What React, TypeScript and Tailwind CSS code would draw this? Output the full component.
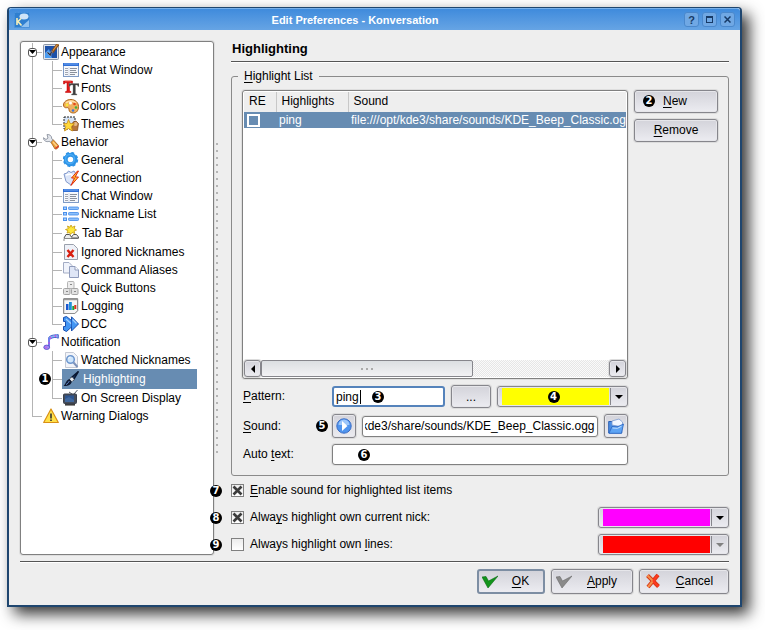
import { type ReactNode } from "react";

const raised =
  "border border-[#86868c] rounded-[3px] bg-linear-to-b from-[#d3d3da] to-[#ececf1] shadow-[inset_0_0_0_1px_#e6e6ea,0_0_0_1px_#dcdcdc]";
const field =
  "min-w-0 border border-[#808080] rounded-[3px] bg-white shadow-[0_0_0_1px_#dedede] outline-none";

function U({ children }: { children: ReactNode }) {
  return <span className="underline underline-offset-2 decoration-1">{children}</span>;
}

function Badge({ n, className = "" }: { n: number; className?: string }) {
  return (
    <span
      className={`flex size-3 shrink-0 items-center justify-center rounded-full bg-black font-['DejaVu_Sans'] text-[10px] leading-3 font-bold text-white ${className}`}
    >
      {n}
    </span>
  );
}

function Svg({ children, size = 16 }: { children: ReactNode; size?: number }) {
  return (
    <svg width={size} height={size} viewBox="0 0 16 16" className="shrink-0" aria-hidden="true">
      {children}
    </svg>
  );
}

const Page = () => <path d="M1.5.5h9l4 4v11h-13z" fill="#eef1f8" stroke="#9aa0ac" />;

const icons: Record<string, ReactNode> = {
  appearance: (
    <>
      <rect x=".5" y=".5" width="15" height="15" rx="1" fill="#dfe3ea" stroke="#8b95a6" />
      <rect x="2" y="2" width="12" height="12" fill="#1c50a8" />
      <path d="M2 14V9l4-4 3 9z" fill="#4a9cf2" />
      <path d="M15 0L9 8.500" stroke="#8a4d16" strokeWidth="3" />
      <path d="M14.500.5L10 6.500" stroke="#d9964a" strokeWidth="1.200" />
      <path d="M9.500 7.500l-2 5-4-4 1.500-.5 2 1.500 1-2.500z" fill="#222c40" stroke="#ccd" strokeWidth=".4" />
    </>
  ),
  chat: (
    <>
      <rect x=".5" y="1.500" width="15" height="13" fill="#f6f8fc" stroke="#7f9bc6" />
      <rect x="0" y="1" width="16" height="3" fill="#2f6fd6" />
      <path d="M1 2h14" stroke="#74a8f2" />
      <path d="M2 6.500h3M2 8.500h3M2 10.500h3M2 12.500h3" stroke="#a0a6b2" />
      <path d="M7 6.500h7M7 8.500h6M7 10.500h7M7 12.500h5" stroke="#8a909c" />
      <path d="M6 5v9" stroke="#c3cbd9" strokeWidth=".6" />
    </>
  ),
  fonts: (
    <>
      <path d="M.5 4V1h9v3H8.500L8 2.700H6.500V11l1.500.6v.9H2.500v-.9L4 11V2.700H2L1.500 4z" fill="#e01818" stroke="#b00" strokeWidth=".5" />
      <path d="M6 6.500V3.500h10v3h-1l-.7-1.500h-1.800v8.500l1.500.7V15H8.500v-.8l1.500-.7V5H7.700L7 6.500z" fill="#3c3c3c" stroke="#888" strokeWidth=".4" />
      <path d="M2 1h6" stroke="#ff7d6d" strokeWidth=".8" />
    </>
  ),
  colors: (
    <>
      <path d="M8 1.500C3.500 1.500.5 4 .5 7c0 2 1.500 3 3 2.700 2-.3 2.500.5 2.500 2 0 2 2 3.300 4.500 3.300 3 0 5-2.500 5-6.500 0-4-3.500-7-7.500-7z" fill="#f0b060" stroke="#ad6418" />
      <path d="M3 5c2-2.500 7-3 10 0" stroke="#ffe0a8" strokeWidth="1.500" fill="none" />
      <circle cx="4" cy="7" r="1.400" fill="#f8e838" />
      <circle cx="7.500" cy="5" r="1.500" fill="#fff" />
      <circle cx="11.500" cy="6" r="1.300" fill="#e24a1c" />
      <circle cx="13" cy="9.500" r="1.300" fill="#44b03a" />
      <circle cx="10" cy="12.500" r="1.300" fill="#3a76e0" />
    </>
  ),
  themes: (
    <>
      <rect x="1" y="1" width="11" height="12" fill="#d4e2f5" stroke="#222" strokeWidth="1" strokeDasharray="2 1" />
      <path d="M10 6l3-1 2.500 2.500-1 7H8z" fill="#b8763a" stroke="#7a4216" strokeWidth=".7" />
      <circle cx="12.500" cy="8" r="2" fill="#e6b98a" />
      <path d="M5.500 3.500L7.200 7.500l4.300.3-3.200 2.700 1.200 4.500-4-2.500L1.500 15l1.200-4.500L.5 7.800 4 7.500z" fill="#ffd93b" stroke="#c98a10" strokeWidth=".8" />
    </>
  ),
  behavior: (
    <>
      <path d="M7.500 7.500l2.500-2 5.500 6c.8 1.500-1.500 4-3.500 3.500z" fill="#eaa03c" stroke="#a5621a" strokeWidth=".8" />
      <path d="M10 8l4.500 5" stroke="#ffd48a" strokeWidth="1.200" />
      <path d="M12.500 14.500l3-2.500" stroke="#d8352a" strokeWidth="1.500" />
      <path d="M4 .6C6.500 0 9 2 8.700 4.700l1.300 1L7.500 8.300l-1.300-1C3.500 8.500.3 6.500.4 3.700L3 5.500l2-1.500z" fill="#e3e6ec" stroke="#7f8794" strokeWidth=".8" />
    </>
  ),
  general: (
    <>
      <circle cx="7.500" cy="7.500" r="4.800" fill="none" stroke="#2d93e6" strokeWidth="4" />
      <circle cx="7.500" cy="7.500" r="6.500" fill="none" stroke="#2d93e6" strokeWidth="2.400" strokeDasharray="2.800 2.300" />
      <circle cx="7" cy="7" r="4.500" fill="none" stroke="#4aaaf4" strokeWidth="1.500" />
    </>
  ),
  connection: (
    <>
      <path d="M1 4l3-1 1.500-2L8 2.500 11 1l2 3-1 7-4 4-5-3.500z" fill="#dbe5f8" stroke="#8299cc" />
      <path d="M3 5l5-1 2 3" stroke="#fff" strokeWidth="1.500" fill="none" />
      <path d="M14.500 1L8.500 8h3L8 15.500 15.500 7H12l3.500-6z" fill="#ffce2e" stroke="#e02812" strokeWidth="1" />
    </>
  ),
  nicklist: (
    <>
      {[1, 6.500, 12].map((y) => (
        <g key={y}>
          <rect x=".5" y={y} width="3" height="2.500" fill="#a8d0ff" stroke="#4a90ec" />
          <rect x="5.500" y={y} width="10" height="2.500" rx=".8" fill="#8cc0fb" stroke="#3f88e8" strokeWidth=".8" />
        </g>
      ))}
    </>
  ),
  tabbar: (
    <>
      <path d="M1 16v-2.500h14.500" stroke="#8a8a8a" strokeWidth="1" fill="none" />
      <path d="M1 13L3 9.500h3.500L8.500 12l2-2.500h3l2 2.500v1H8" fill="#ececec" stroke="#555" strokeWidth="1" />
      <path d="M8 0l1.200 2.300L12 1l-.8 2.500L13.500 5 11 6l.8 2.500L9 7.500 7.500 9.500 6.500 7.500 4 8l1-2.300L2.500 4.500 5.300 3.700 4.500 1 7 2.300z" fill="#ffe83a" stroke="#c79a10" strokeWidth=".8" />
    </>
  ),
  ignored: (
    <>
      <Page />
      <path d="M4.500 6l6 7M10.500 6l-6 7" stroke="#d81e10" strokeWidth="2.400" />
    </>
  ),
  aliases: (
    <>
      <path d="M.5.500h5.500l3 3V11H.5z" fill="#f0f3fb" stroke="#a3acc4" />
      <path d="M6.500 4.500H12l3.500 3.500v7.500h-9z" fill="#dfe6f6" stroke="#8f9bbb" />
      <path d="M12 4.500V8h3.500" fill="#fff" stroke="#8f9bbb" />
    </>
  ),
  quick: (
    <>
      <rect x="4.500" y="1.500" width="6.500" height="7" rx="1" fill="#ededed" stroke="#b4b4b4" />
      <rect x=".5" y="8.500" width="6.500" height="6" rx="1" fill="#e2e2e2" stroke="#a4a4a4" />
      <rect x="8.500" y="8.500" width="6.500" height="6" rx="1" fill="#e2e2e2" stroke="#a4a4a4" />
      <path d="M7 4.500h2M3 11.500h2M11 11.500h2" stroke="#888" />
    </>
  ),
  logging: (
    <>
      <path d="M.7.7h14v12l-3 3H.7z" fill="#f6f6f6" stroke="#777" />
      <path d="M1 1.500h13.500" stroke="#999" strokeWidth="1.500" />
      <rect x="3" y="6" width="2.500" height="6" fill="#1b58d0" />
      <rect x="6" y="4" width="2.800" height="8" fill="#2090d8" />
      <rect x="9.300" y="8" width="2" height="4" fill="#18a33a" />
      <rect x="11.300" y="7" width="2" height="4" fill="#e03018" />
    </>
  ),
  dcc: (
    <>
      <path
        d="M.5 1.500L3.500.5l5 4V.8l7 7.200-7 7v-4l-5 4.500-3-1.500v-3.500h2v-5h-2z"
        fill="#4396f4"
        stroke="#1a4fae"
        strokeLinejoin="round"
      />
      <path d="M3 3l5.500 5M9.500 3.500l4 4" stroke="#a3d0ff" strokeWidth="1.200" />
      <path d="M8.500 11V4.500" stroke="#1a4fae" strokeWidth=".8" />
    </>
  ),
  notification: (
    <>
      <path d="M5.500 13V4c1-2.500 5-3.300 9.800-3.300v3.500C13 2.800 9 3.500 7.300 5" fill="#8fb0f4" stroke="#4a66d0" strokeWidth="1" />
      <path d="M6 4v9.500" stroke="#6f7df0" strokeWidth="2" />
      <ellipse cx="3.700" cy="13.300" rx="2.900" ry="2.200" fill="#9d8cf4" stroke="#5648c4" strokeWidth=".8" />
      <path d="M2.500 13.500h1M7 4h1M12 2h1M5.500 9h1" stroke="#f032d8" strokeWidth="1.300" />
    </>
  ),
  watched: (
    <>
      <path d="M2.500.5h8l4 4v11h-12z" fill="#f2f4f9" stroke="#c4c9d4" />
      <circle cx="7.500" cy="7.500" r="3.800" fill="#cfe6fb" stroke="#6c96cf" strokeWidth="1.500" />
      <path d="M5.500 6.500a2 2 0 012-1.500" stroke="#fff" fill="none" />
      <path d="M10.500 10.500l4 4.500" stroke="#7c92ba" strokeWidth="2" />
    </>
  ),
  highlighting: (
    <>
      <path d="M15.500.5L8.500 6.500l2 2.200z" fill="#24406e" stroke="#0a1730" strokeWidth="1.500" />
      <path d="M9 6l2.300 2.500-2.500 2.200-2.500-2.500z" fill="#e6e9ee" stroke="#555" strokeWidth=".5" />
      <path d="M6.500 8l2.300 2.700C8 14 4 15.500.5 15c2-1.500 2.500-6 6-7z" fill="#0d1830" />
      <path d="M3 13.500c1.500-.5 2.500-2 3.300-3.500" stroke="#5f86c6" fill="none" />
    </>
  ),
  osd: (
    <>
      <path d="M14.500 0L11 4M6 2l3 2" stroke="#555b66" />
      <rect x=".5" y="4" width="13" height="9.500" rx="1" fill="#454d5a" stroke="#3a414d" />
      <rect x="2" y="5.500" width="9" height="6.500" fill="#2c5590" />
      <path d="M2 9l4-2 5 3v2H2z" fill="#41699f" />
      <path d="M2 14.800h10" stroke="#333" strokeWidth="1.500" />
    </>
  ),
  warning: (
    <>
      <path d="M8 1l7.300 13.500H.7z" fill="#ffe14a" stroke="#d98f14" strokeWidth="1.200" strokeLinejoin="round" />
      <path d="M8 5.500v5" stroke="#333" strokeWidth="1.600" />
      <path d="M8 11.500v1.600" stroke="#333" strokeWidth="1.600" />
    </>
  ),
};

type Leaf = { icon: string; label: string; tall?: boolean; selected?: boolean };
type Group = { icon: string; label: string; children: Leaf[] };

const tree: Group[] = [
  {
    icon: "appearance",
    label: "Appearance",
    children: [
      { icon: "chat", label: "Chat Window" },
      { icon: "fonts", label: "Fonts" },
      { icon: "colors", label: "Colors" },
      { icon: "themes", label: "Themes" },
    ],
  },
  {
    icon: "behavior",
    label: "Behavior",
    children: [
      { icon: "general", label: "General" },
      { icon: "connection", label: "Connection" },
      { icon: "chat", label: "Chat Window" },
      { icon: "nicklist", label: "Nickname List" },
      { icon: "tabbar", label: "Tab Bar", tall: true },
      { icon: "ignored", label: "Ignored Nicknames" },
      { icon: "aliases", label: "Command Aliases" },
      { icon: "quick", label: "Quick Buttons" },
      { icon: "logging", label: "Logging" },
      { icon: "dcc", label: "DCC" },
    ],
  },
  {
    icon: "notification",
    label: "Notification",
    children: [
      { icon: "watched", label: "Watched Nicknames" },
      { icon: "highlighting", label: "Highlighting", tall: true, selected: true },
      { icon: "osd", label: "On Screen Display" },
    ],
  },
  { icon: "warning", label: "Warning Dialogs", children: [] },
];

function Elbow({ last }: { last?: boolean }) {
  return (
    <span className="flex w-[10px] shrink-0 flex-col self-stretch">
      <span className="flex-1 border-b border-l border-[#b4b4b4]" />
      <span className={`flex-1 border-[#b4b4b4] ${last ? "" : "border-l"}`} />
    </span>
  );
}

function TreeLeaf({ leaf, last }: { leaf: Leaf; last: boolean }) {
  return (
    <li className={`relative flex items-center ${leaf.tall ? "h-5" : "h-[18px]"}`}>
      <span className="w-5 shrink-0 self-stretch border-l border-[#b4b4b4]" />
      <Elbow last={last} />
      {leaf.selected && <Badge n={1} className="absolute left-[7px]" />}
      <button
        className={`flex h-full items-center whitespace-nowrap ${
          leaf.selected ? "w-[135px] gap-1 bg-[#678cb2] pl-px text-white" : leaf.tall ? "gap-[3px] pl-px" : "gap-0.5 pl-px"
        }`}
      >
        <Svg>{icons[leaf.icon]}</Svg>
        {leaf.label}
      </button>
    </li>
  );
}

function Tree() {
  return (
    <nav className="w-[194px] shrink-0 rounded-[3px] border border-[#808080] bg-white pt-px shadow-[0_0_0_1px_#dedede]">
      <ul className="pl-[11px]">
        {tree.map((g, i) => (
          <li key={g.label}>
            <div className="relative flex h-[18px] items-center">
              <Elbow last={i === tree.length - 1} />
              {g.children.length > 0 && (
                <span className="absolute -left-1 flex size-[9px] items-center justify-center rounded-[3px] border border-[#555] bg-white">
                  <svg width="7" height="4" viewBox="0 0 7 4" aria-hidden="true">
                    <path d="M0 0h7L3.500 4z" />
                  </svg>
                </span>
              )}
              <button className="flex items-center gap-0.5 pl-px whitespace-nowrap">
                <Svg>{icons[g.icon]}</Svg>
                {g.label}
              </button>
            </div>
            {g.children.length > 0 && (
              <ul>
                {g.children.map((leaf, k) => (
                  <TreeLeaf key={leaf.label} leaf={leaf} last={k === g.children.length - 1} />
                ))}
              </ul>
            )}
          </li>
        ))}
      </ul>
    </nav>
  );
}

function ColorSelect({
  label,
  swatch,
  disabled,
  badge,
}: {
  label: string;
  swatch: string;
  disabled?: boolean;
  badge?: number;
}) {
  return (
    <span className={`relative flex h-[21px] w-[131px] shrink-0 p-px pl-1 ${raised}`}>
      <span className={`flex flex-1 items-center justify-center pr-1 ${swatch}`}>{badge && <Badge n={badge} />}</span>
      <span className="ml-px flex w-4 items-center justify-center border-l border-[#86868c]">
        <svg width="8" height="4" viewBox="0 0 8 4" aria-hidden="true">
          <path d="M0 0h8L4 4z" fill={disabled ? "#808080" : "#000"} />
        </svg>
      </span>
      <select aria-label={label} disabled={disabled} className="absolute inset-0 appearance-none opacity-0">
        <option />
      </select>
    </span>
  );
}

function CheckRow({
  n,
  id,
  checked,
  label,
  children,
}: {
  n: number;
  id: string;
  checked?: boolean;
  label: ReactNode;
  children?: ReactNode;
}) {
  return (
    <div className="relative flex h-[21px] items-center">
      <Badge n={n} className="absolute -left-[21px]" />
      <span className="relative flex size-[13px] shrink-0">
        <input
          id={id}
          type="checkbox"
          defaultChecked={checked}
          className="peer size-[13px] appearance-none border border-[#808080] bg-linear-to-b from-[#ececec] to-white"
        />
        <svg
          width="13"
          height="13"
          viewBox="0 0 13 13"
          className="pointer-events-none absolute inset-0 hidden peer-checked:block"
          aria-hidden="true"
        >
          <path d="M2.500 2.500l8 8M10.500 2.500l-8 8" stroke="#3c3c3c" strokeWidth="2.600" />
        </svg>
      </span>
      <label htmlFor={id} className="flex-1 pb-px pl-[6px]">
        {label}
      </label>
      {children}
    </div>
  );
}

function HighlightTable() {
  return (
    <div className="flex h-[289px] flex-col rounded-[3px] border border-[#808080] bg-white p-px shadow-[0_0_0_1px_#dedede]">
      <div className="flex-1 overflow-hidden">
        <table className="w-full table-fixed border-collapse text-left whitespace-nowrap">
          <thead>
            <tr className="h-5 bg-[#eee]">
              <th className="w-8 border-r border-[#c8c8c8] pb-[2px] pl-[5px] font-normal">RE</th>
              <th className="w-[72px] border-r border-[#c8c8c8] pb-[2px] pl-[5px] font-normal">Highlights</th>
              <th className="pb-[2px] pl-[5px] font-normal">Sound</th>
            </tr>
          </thead>
          <tbody>
            <tr className="h-4 bg-[#678cb2] leading-4 text-white">
              <td className="pl-[3px]">
                <input
                  type="checkbox"
                  aria-label="Regular expression"
                  className="block size-[13px] appearance-none border-2 border-white"
                />
              </td>
              <td className="pl-[3px]">ping</td>
              <td className="overflow-hidden pl-[3px]">file:///opt/kde3/share/sounds/KDE_Beep_Classic.ogg</td>
            </tr>
          </tbody>
        </table>
      </div>
      <div className="flex h-[17px] bg-[repeating-conic-gradient(#e6e6e6_0_25%,#fafafa_0_50%)] bg-[size:2px_2px]">
        <button aria-label="Scroll left" className={`flex w-[17px] items-center justify-center ${raised}`}>
          <svg width="4" height="8" viewBox="0 0 4 8" aria-hidden="true">
            <path d="M4 0v8L0 4z" />
          </svg>
        </button>
        <div className="flex flex-1">
          <div className="flex w-[61%] items-center justify-center gap-[3px] rounded-[2px] border border-[#86868c] bg-linear-to-b from-[#dcdfe2] to-[#f2f2f4]">
            <i className="size-[2px] bg-[#aaa]" />
            <i className="size-[2px] bg-[#aaa]" />
            <i className="size-[2px] bg-[#aaa]" />
          </div>
        </div>
        <button aria-label="Scroll right" className={`flex w-[17px] items-center justify-center ${raised}`}>
          <svg width="4" height="8" viewBox="0 0 4 8" aria-hidden="true">
            <path d="M0 0v8l4-4z" />
          </svg>
        </button>
      </div>
    </div>
  );
}

function HighlightForm() {
  const showEnd = (el: HTMLInputElement | null) => {
    if (el) el.scrollLeft = el.scrollWidth;
  };
  return (
    <div className="mt-[6px] grid grid-cols-[90px_1fr] items-center gap-y-[6px]">
      <label htmlFor="pattern" className="pb-px pl-px">
        <U>P</U>attern:
      </label>
      <div className="flex items-center gap-[6px]">
        <span className="relative flex min-w-0 flex-1 items-center">
          <input
            id="pattern"
            defaultValue="ping"
            className="h-[21px] w-full min-w-0 rounded-[3px] border-2 border-[#5583bb] bg-white pl-[2px] outline-none"
          />
          <i className="absolute left-[28px] h-[14px] w-px bg-black" />
          <Badge n={3} className="absolute left-10" />
        </span>
        <button className={`h-[23px] w-10 ${raised}`}>...</button>
        <ColorSelect label="Highlight color" swatch="bg-[#ffff00]" badge={4} />
      </div>

      <label htmlFor="sound" className="flex items-center justify-between pr-1 pl-px">
        <span>
          <U>S</U>ound:
        </span>
        <Badge n={5} />
      </label>
      <div className="flex items-center gap-[6px]">
        <button aria-label="Play" className={`flex size-6 shrink-0 items-center justify-center ${raised}`}>
          <Svg>
            <circle cx="8" cy="8" r="7.200" fill="#4f94ee" stroke="#3a6cc4" />
            <path d="M2.500 7a5.500 5.500 0 0111 0z" fill="#9cc6fa" />
            <path d="M6 3v10l5.500-5z" fill="#fff" />
          </Svg>
        </button>
        <input
          id="sound"
          ref={showEnd}
          defaultValue="file:///opt/kde3/share/sounds/KDE_Beep_Classic.ogg"
          className={`h-[21px] flex-1 px-[2px] ${field}`}
        />
        <button aria-label="Choose file" className={`flex size-6 shrink-0 items-center justify-center ${raised}`}>
          <Svg>
            <path d="M.7 3.500h4l1 1.500h8v10h-13z" fill="#4d8fe4" stroke="#2a5fb4" />
            <path d="M4 7V3l7-2 3.500 3v5z" fill="#f2f7ff" stroke="#7b9bcf" strokeWidth=".8" />
            <path d="M1 15.300L4 8.500l5 .5 6.500-3-2 9.300z" fill="#5ea4f4" stroke="#2a64c2" strokeWidth=".8" />
            <path d="M4.500 10l5 .3 4-2" stroke="#c3e0ff" fill="none" />
          </Svg>
        </button>
      </div>

      <label htmlFor="autotext" className="pb-px pl-px">
        Auto <U>t</U>ext:
      </label>
      <span className="relative flex items-center">
        <input id="autotext" className={`h-[21px] w-full px-[3px] ${field}`} />
        <Badge n={6} className="absolute left-[26px]" />
      </span>
    </div>
  );
}

function TitleButton({ label, children }: { label: string; children: ReactNode }) {
  return (
    <button
      aria-label={label}
      className="flex size-[15px] items-center justify-center rounded-[3px] border border-[#4a88cc] bg-[#70a8e4] text-[11px] leading-3 font-bold text-[#173a66]"
    >
      {children}
    </button>
  );
}

export default function App() {
  return (
    <div className="flex min-h-screen bg-white pt-[7px] pr-[23px] pb-6 pl-[7px] font-['Liberation_Sans',Arial,sans-serif] text-[12px] leading-4 text-black">
      <main className="flex min-w-0 flex-1 flex-col rounded-t-[4px] border-2 border-t border-[#1f466f] bg-[#eee] shadow-[7px_7px_15px_0_rgba(0,0,0,0.8)]">
        <header className="flex h-[22px] shrink-0 items-center rounded-t-[3px] border-t border-[#78b0ea] bg-linear-to-b from-[#3f8bdc] to-[#66a4e4] pr-[5px] pl-[5px]">
          <Svg>
            <rect x=".5" y=".5" width="15" height="15" fill="#2f7fcf" stroke="#4a93dc" strokeDasharray="2 1" />
            <ellipse cx="10" cy="4.500" rx="4.500" ry="3" fill="#cfe4f8" />
            <path d="M7 15l8-7v7z" fill="#8fc1f0" />
            <path d="M3 6v7M7 6.500L4 9.500l3.500 4" stroke="#f6efb8" strokeWidth="1.600" fill="none" />
          </Svg>
          <h1 className="flex-1 pr-1 text-center text-[11px] font-bold text-white">Edit Preferences - Konversation</h1>
          <div className="flex gap-[3px]">
            <TitleButton label="Help">?</TitleButton>
            <TitleButton label="Maximize">
              <span className="size-[7px] border border-t-2 border-[#173a66]" />
            </TitleButton>
            <TitleButton label="Close">
              <svg width="7" height="7" viewBox="0 0 7 7" aria-hidden="true">
                <path d="M.5.5l6 6M6.500.5l-6 6" stroke="#173a66" strokeWidth="1.500" />
              </svg>
            </TitleButton>
          </div>
        </header>

        <div className="flex flex-1 flex-col px-[11px] pt-[11px] pb-[11px]">
          <div className="flex flex-1">
            <Tree />
            <div className="flex w-[17px] shrink-0 items-center justify-center pr-[11px]">
              <i className="h-[310px] w-[2px] bg-[repeating-linear-gradient(#b4b4b4_0_2px,transparent_2px_7px)]" />
            </div>

            <section className="min-w-0 flex-1">
              <h2 className="border-b border-[#555] pb-[5px] pl-px text-[13px] leading-[15px] font-bold shadow-[0_1px_0_#fff]">
                Highlighting
              </h2>
              <fieldset className="mt-[6px] min-w-0 rounded-[3px] border border-[#8a8a8a] px-[10px] pb-[10px]">
                <legend className="ml-[-4px] px-[6px]">
                  <U>H</U>ighlight List
                </legend>
                <div className="mt-[6px] flex gap-[6px]">
                  <div className="min-w-0 flex-1">
                    <HighlightTable />
                    <HighlightForm />
                  </div>
                  <div className="flex w-[84px] shrink-0 flex-col gap-[6px]">
                    <button className={`flex h-[23px] items-center gap-2 pb-px pl-2 ${raised}`}>
                      <Badge n={2} />
                      <span>
                        <U>N</U>ew
                      </span>
                    </button>
                    <button className={`h-[23px] pb-px ${raised}`}>
                      <U>R</U>emove
                    </button>
                  </div>
                </div>
              </fieldset>

              <div className="mt-1 flex flex-col gap-[6px]">
                <CheckRow
                  n={7}
                  id="enable-sound"
                  checked
                  label={
                    <>
                      <U>E</U>nable sound for highlighted list items
                    </>
                  }
                />
                <CheckRow
                  n={8}
                  id="own-nick"
                  checked
                  label={
                    <>
                      Alwa<U>y</U>s highlight own current nick:
                    </>
                  }
                >
                  <ColorSelect label="Own nick color" swatch="bg-[#ff00ff]" />
                </CheckRow>
                <CheckRow
                  n={9}
                  id="own-lines"
                  label={
                    <>
                      Always highlight own <U>l</U>ines:
                    </>
                  }
                >
                  <ColorSelect label="Own lines color" swatch="bg-[#ff0000]" disabled />
                </CheckRow>
              </div>
            </section>
          </div>

          <footer className="mt-[6px] flex justify-end gap-[6px] border-t border-[#555] pt-[7px] shadow-[inset_0_1px_0_#fff]">
            <button className="flex h-[25px] w-[68px] items-center rounded-[3px] border-2 border-[#7d8ea3] bg-linear-to-b from-[#d3d3da] to-[#ececf1] pb-[2px] pl-[3px]">
              <Svg>
                <path d="M0 4l4-.500L6.500 8 16 3 6 15z" fill="#12941c" stroke="#0a6a12" strokeWidth=".6" />
              </Svg>
              <span className="flex-1 text-center">
                <U>O</U>K
              </span>
            </button>
            <button className={`flex h-[25px] w-[82px] items-center pb-[2px] pl-1 ${raised}`}>
              <Svg>
                <path d="M0 4l4-.500L6.500 8 16 3 6 15z" fill="#8a8a8a" stroke="#6a6a6a" strokeWidth=".6" />
              </Svg>
              <span className="flex-1 text-center">
                <U>A</U>pply
              </span>
            </button>
            <button className={`flex h-[25px] w-[90px] items-center pb-[2px] pl-[5px] ${raised}`}>
              <Svg>
                <path d="M2.500 2.500l11 11M13 2L3 14" stroke="#d83818" strokeWidth="4" />
                <path d="M2.500 2.500L8 8M3 14l5-6" stroke="#f5904a" strokeWidth="2" />
                <path d="M8 8l5.500 5.500M8 8l5-6" stroke="#ff3a20" strokeWidth="2" />
              </Svg>
              <span className="flex-1 text-center">
                <U>C</U>ancel
              </span>
            </button>
          </footer>
        </div>
      </main>
    </div>
  );
}
